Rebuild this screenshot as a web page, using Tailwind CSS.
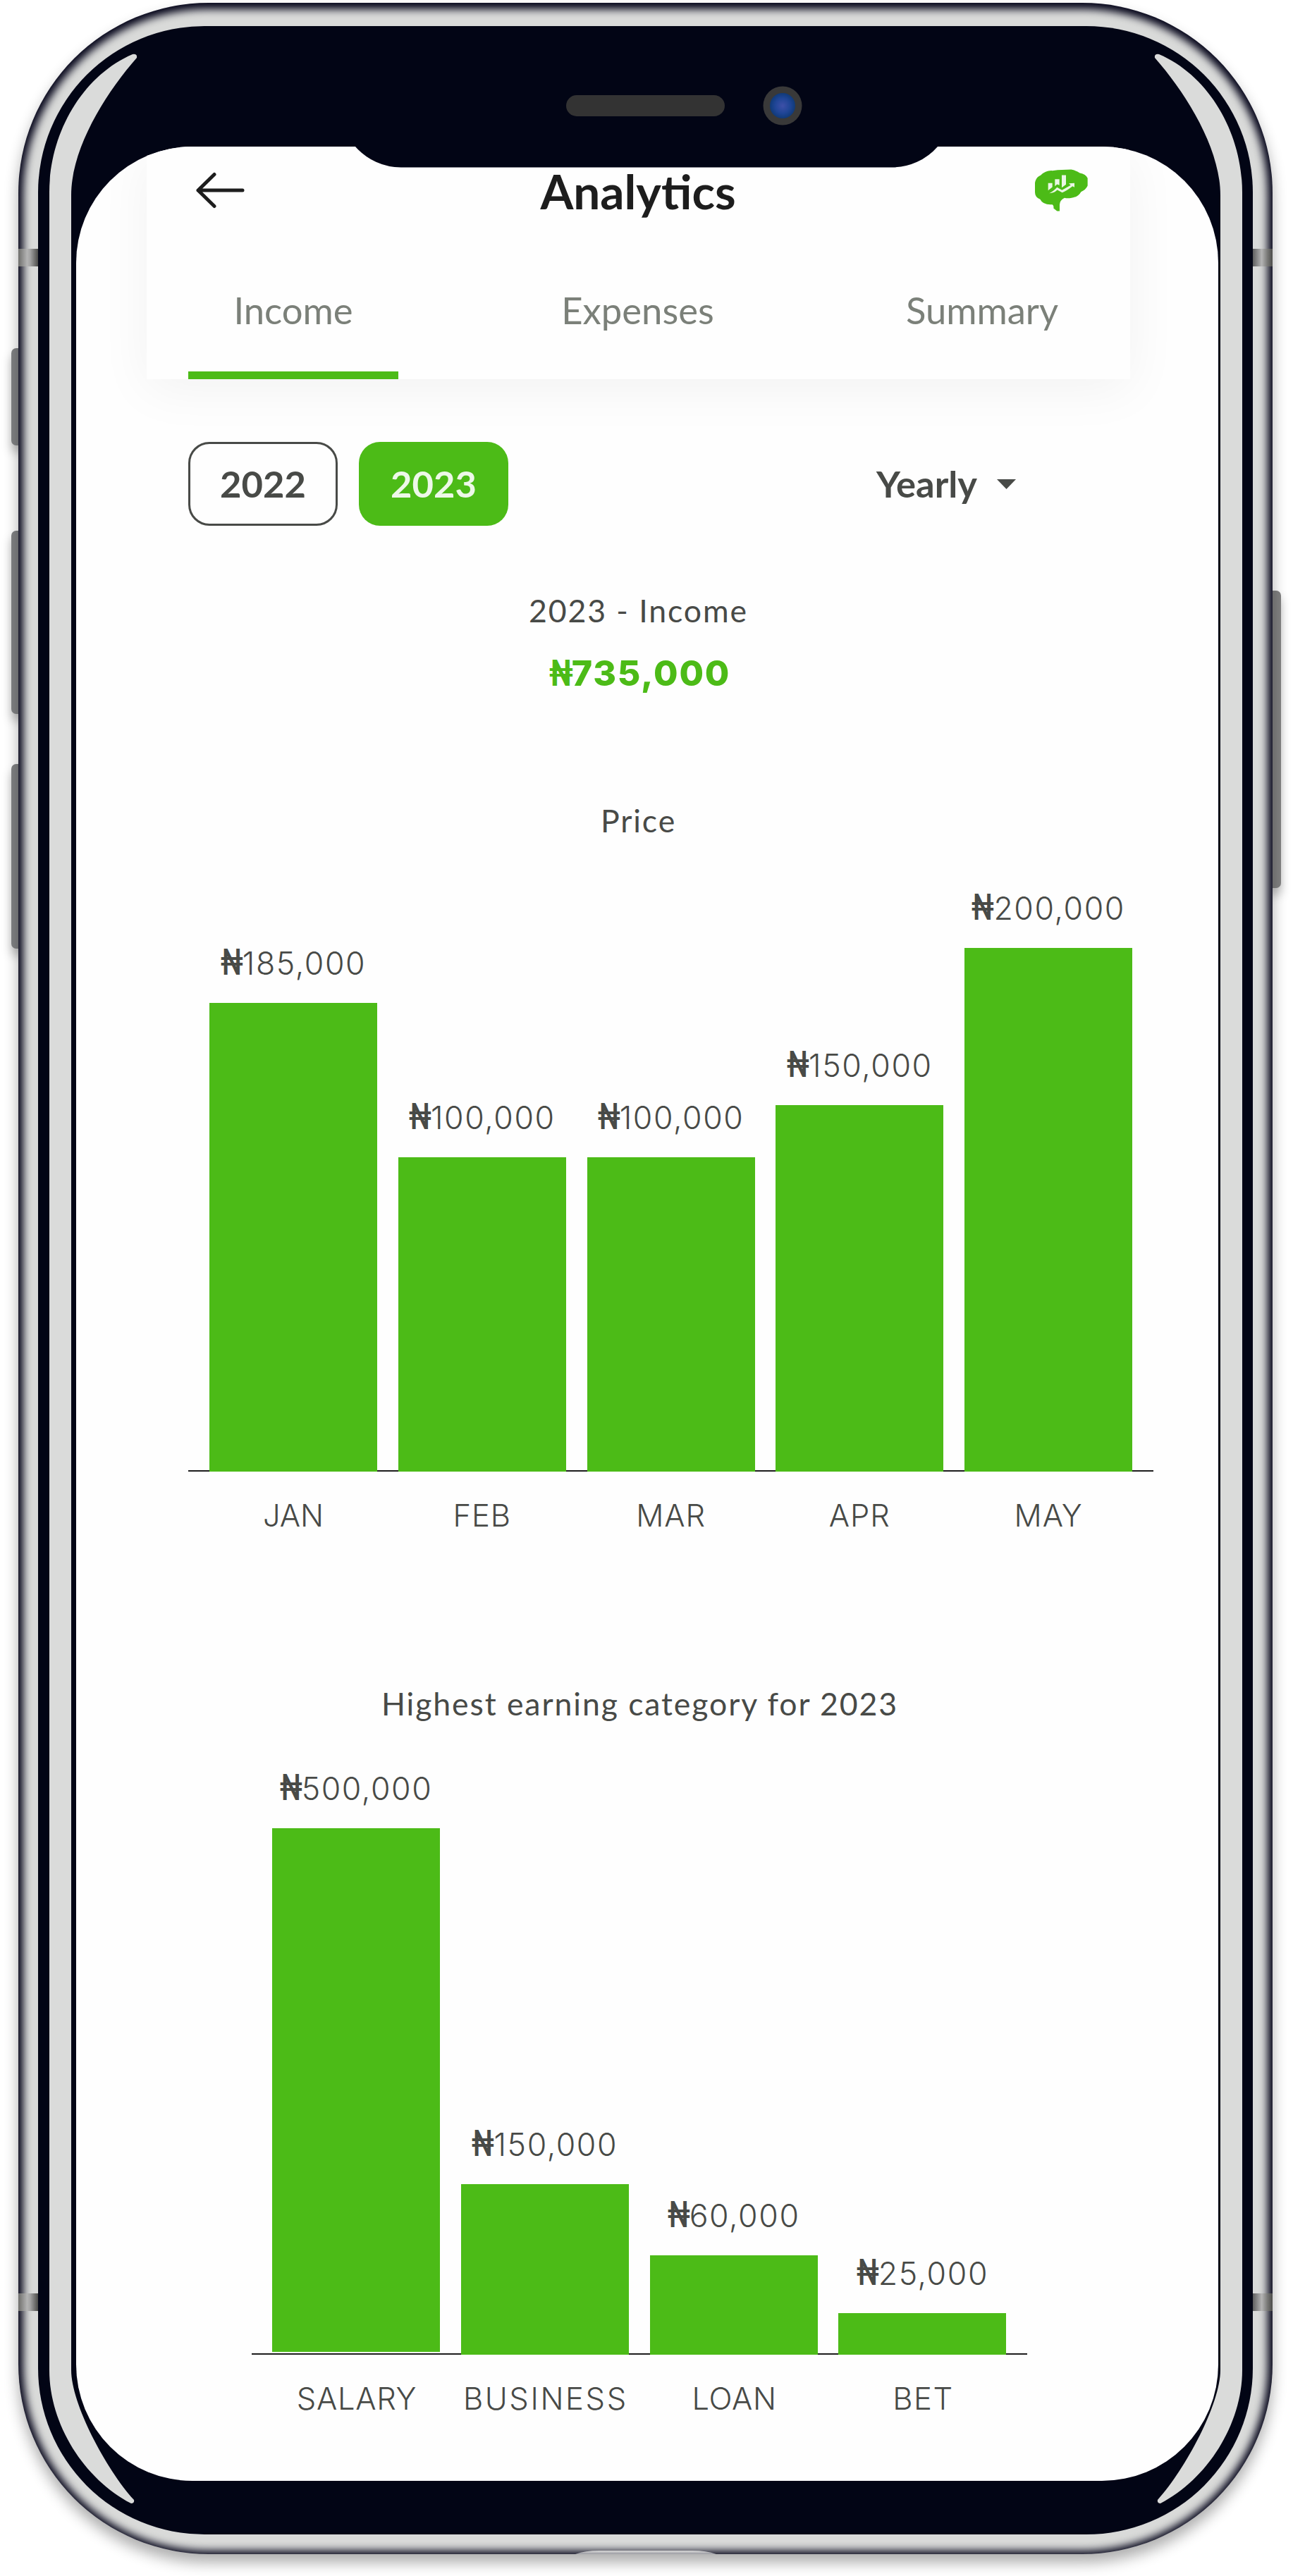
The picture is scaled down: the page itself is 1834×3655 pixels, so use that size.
<!DOCTYPE html>
<html lang="en">
<head>
<meta charset="utf-8">
<title>Analytics</title>
<script src="https://cdn.jsdelivr.net/npm/@tailwindcss/browser@4"></script>
</head>
<body class="bg-white">
<div class="relative w-[1834px] h-[3655px] overflow-hidden pl-[26px] pt-[4px] font-['Lato',sans-serif]">

  <!-- side buttons -->
  <div class="absolute left-[16px] top-[494px] w-[20px] h-[138px] rounded-[7px] bg-[#828385] shadow-[0_10px_14px_rgba(0,0,0,0.25)]"></div>
  <div class="absolute left-[16px] top-[753px] w-[20px] h-[260px] rounded-[7px] bg-[#828385] shadow-[0_10px_14px_rgba(0,0,0,0.25)]"></div>
  <div class="absolute left-[16px] top-[1084px] w-[20px] h-[262px] rounded-[7px] bg-[#828385] shadow-[0_10px_14px_rgba(0,0,0,0.25)]"></div>
  <div class="absolute left-[1797px] top-[838px] w-[20px] h-[422px] rounded-[7px] bg-[#828282] shadow-[0_10px_14px_rgba(0,0,0,0.25)]"></div>

  <!-- device frame -->
  <div class="relative w-[1779px] h-[3620px] rounded-[270px] bg-[#d9dad9] pl-[28px] pt-[33px] shadow-[0_12px_20px_rgba(0,0,0,0.32),inset_0_2px_12px_7px_#05051a]">
    <div class="w-[1723px] h-[3559px] rounded-[236px] bg-[#020515] pl-[54px] pt-[171px]">

      <!-- screen -->
      <div class="w-[1620px] h-[3312px] rounded-[165px] bg-[#fefefe] overflow-hidden pl-[100px]">
        <header class="w-[1395px] h-[330px] bg-[#fefefe] pt-[30px] shadow-[0_14px_70px_rgba(0,0,0,0.05)]">
          <div class="flex items-center justify-between h-[64px] pl-[70px] pr-[60px]">
            <svg class="w-[74px] h-[54px]" viewBox="0 0 74 54" fill="none" stroke="#1d1d1d" stroke-width="5" stroke-linecap="round" stroke-linejoin="round"><path d="M66 27H3M26 4.500L3 27L26 49.500"/></svg>
            <h1 class="pt-[2px] pr-[10px] text-[67.500px] leading-[64px] font-bold text-[#1d1d1d]">Analytics</h1>
            <svg class="w-[75px] h-[60px]" viewBox="84 62 225 179"><path fill="#4cbb17" d="M180 65L238 63Q262 68 275 78Q300 82 308 100V132Q300 150 280 158Q268 180 240 184Q222 187 210 184Q190 194 189 212V240H178L163 228Q165 216 158 212Q118 215 106 190Q84 182 84 160V120Q88 96 108 88Q130 66 158 68Z"/><path fill="#eaf7e5" d="M140 121H158V138L140 152ZM169 104H188V130L178 126L169 134ZM198 87H216V127L198 140ZM145 164Q160 158 178 139L199 151L236 130L228 122L252 121V139L244 134Q215 156 200 161L179 150Q165 164 145 164Z"/></svg>
          </div>
          <nav class="flex justify-between pl-[59px] pr-[61px] pt-[106px] text-[52.600px] leading-[64px] text-[#7b8079] text-center">
            <div class="w-[298px] h-[130px] border-b-[11px] border-[#4cbb17]">Income</div>
            <div class="w-[298px] h-[130px]">Expenses</div>
            <div class="w-[298px] h-[130px]">Summary</div>
          </nav>
        </header>

        <main class="w-[1395px] text-[#484a47]">
          <div class="flex items-center justify-between pt-[89px] pl-[59px] pr-[162px] text-[52.500px] leading-[64px] font-bold">
            <div class="flex gap-[30px]">
              <div class="flex items-center justify-center w-[212px] h-[119px] rounded-[30px] border-[3px] border-[#484a47] pb-[2px]">2022</div>
              <div class="flex items-center justify-center w-[212px] h-[119px] rounded-[30px] bg-[#4cbb17] text-[#edf8e8] pb-[2px]">2023</div>
            </div>
            <div class="flex items-center gap-[28px]">
              <span class="pb-[2px]">Yearly</span>
              <svg class="w-[27px] h-[14px]" viewBox="0 0 27 14"><path fill="#484a47" d="M0 0H27L13.500 14Z"/></svg>
            </div>
          </div>

          <p class="mt-[90px] text-center text-[44.600px] leading-[60px] tracking-[1.900px]">2023 - Income</p>
          <p class="mt-[29px] h-[60px] pl-[4px] flex justify-center items-baseline leading-[60px] font-extrabold text-[#4cbb17] font-['Inter',sans-serif] text-[50px] tracking-[1.800px]"><span class="w-[32px] origin-left scale-x-[0.8] font-['Roboto'] font-bold text-[52px] tracking-normal">₦</span>735,000</p>

          <section class="font-['Inter',sans-serif] font-light text-[44.600px] leading-[60px]">
            <h2 class="mt-[149px] text-center font-normal font-['Lato',sans-serif] tracking-[1.900px]">Price</h2>
            <div class="ml-[59px] flex items-end gap-[29.800px] w-[1369px] h-[894px] pl-[30px] border-b-2 border-[#1d1d1d] whitespace-nowrap tracking-[1.600px]">
              <div class="w-[238px] -mb-[2px]"><p class="flex justify-center items-baseline h-[60px]"><span class="w-[31px] origin-left scale-x-[0.76] text-[52px] font-['Roboto'] font-medium tracking-normal">₦</span>185,000</p><div class="mt-[27px] h-[665px] bg-[#4cbb17]"></div></div>
              <div class="w-[238px] -mb-[2px]"><p class="flex justify-center items-baseline h-[60px]"><span class="w-[31px] origin-left scale-x-[0.76] text-[52px] font-['Roboto'] font-medium tracking-normal">₦</span>100,000</p><div class="mt-[27px] h-[446px] bg-[#4cbb17]"></div></div>
              <div class="w-[238px] -mb-[2px]"><p class="flex justify-center items-baseline h-[60px]"><span class="w-[31px] origin-left scale-x-[0.76] text-[52px] font-['Roboto'] font-medium tracking-normal">₦</span>100,000</p><div class="mt-[27px] h-[446px] bg-[#4cbb17]"></div></div>
              <div class="w-[238px] -mb-[2px]"><p class="flex justify-center items-baseline h-[60px]"><span class="w-[31px] origin-left scale-x-[0.76] text-[52px] font-['Roboto'] font-medium tracking-normal">₦</span>150,000</p><div class="mt-[27px] h-[520px] bg-[#4cbb17]"></div></div>
              <div class="w-[238px] -mb-[2px]"><p class="flex justify-center items-baseline h-[60px]"><span class="w-[31px] origin-left scale-x-[0.76] text-[52px] font-['Roboto'] font-medium tracking-normal">₦</span>200,000</p><div class="mt-[27px] h-[743px] bg-[#4cbb17]"></div></div>
            </div>
            <div class="ml-[89px] mt-[32px] flex gap-[29.800px] w-[1309px] text-center text-[43.500px] tracking-[0.900px]">
              <div class="w-[238px] tracking-normal">JAN</div><div class="w-[238px]">FEB</div><div class="w-[238px]">MAR</div><div class="w-[238px]">APR</div><div class="w-[238px]">MAY</div>
            </div>
          </section>

          <section class="font-['Inter',sans-serif] font-light text-[44.600px] leading-[60px]">
            <h2 class="mt-[207px] pl-[4px] text-center font-normal font-['Lato',sans-serif] tracking-[1.900px]">Highest earning category for 2023</h2>
            <div class="ml-[149px] flex items-end gap-[29.800px] w-[1100px] h-[894px] pl-[29px] border-b-2 border-[#1d1d1d] whitespace-nowrap tracking-[1.600px]">
              <div class="w-[238px] mb-[2px]"><p class="flex justify-center items-baseline h-[60px]"><span class="w-[31px] origin-left scale-x-[0.76] text-[52px] font-['Roboto'] font-medium tracking-normal">₦</span>500,000</p><div class="mt-[27px] h-[743px] bg-[#4cbb17]"></div></div>
              <div class="w-[238px] -mb-[2px]"><p class="flex justify-center items-baseline h-[60px]"><span class="w-[31px] origin-left scale-x-[0.76] text-[52px] font-['Roboto'] font-medium tracking-normal">₦</span>150,000</p><div class="mt-[27px] h-[242px] bg-[#4cbb17]"></div></div>
              <div class="w-[238px] -mb-[2px]"><p class="flex justify-center items-baseline h-[60px]"><span class="w-[31px] origin-left scale-x-[0.76] text-[52px] font-['Roboto'] font-medium tracking-normal">₦</span>60,000</p><div class="mt-[27px] h-[141px] bg-[#4cbb17]"></div></div>
              <div class="w-[238px] -mb-[2px]"><p class="flex justify-center items-baseline h-[60px]"><span class="w-[31px] origin-left scale-x-[0.76] text-[52px] font-['Roboto'] font-medium tracking-normal">₦</span>25,000</p><div class="mt-[27px] h-[59px] bg-[#4cbb17]"></div></div>
            </div>
            <div class="ml-[179px] mt-[32px] flex gap-[29.800px] text-center text-[43.500px] tracking-[1.500px]">
              <div class="w-[238px] tracking-[0.700px]">SALARY</div><div class="w-[238px] tracking-[2.600px]">BUSINESS</div><div class="w-[238px] tracking-[0.700px]">LOAN</div><div class="w-[238px]">BET</div>
            </div>
          </section>
        </main>
      </div>
    </div>
  </div>

  <!-- notch, speaker, camera, edge highlights and antenna bands -->
  <svg class="absolute left-0 top-0 w-[1834px] h-[3655px]" viewBox="0 0 1834 3655">
    <defs>
      <linearGradient id="bandL"><stop offset="0" stop-color="#6e6e6c"/><stop offset=".45" stop-color="#b4b4b4"/><stop offset=".6" stop-color="#a4a4a4"/><stop offset="1" stop-color="#4c4c4a"/></linearGradient>
      <linearGradient id="bandR"><stop offset="0" stop-color="#606060"/><stop offset=".45" stop-color="#b4b4b4"/><stop offset=".75" stop-color="#777775"/><stop offset="1" stop-color="#4c4c4a"/></linearGradient>
      <radialGradient id="lens"><stop offset="0" stop-color="#3e50a8"/><stop offset=".6" stop-color="#1f4596"/><stop offset="1" stop-color="#103a78"/></radialGradient>
      <linearGradient id="port" x1="0" y1="0" x2="0" y2="1"><stop offset="0" stop-color="#d9dad9"/><stop offset="1" stop-color="#9a9aa2"/></linearGradient>
      <path id="shine" d="M70 3363V273C70 190 116 108 188 77Q195 76 194 82C150 132 101 210 101 277V3363C101 3410 150 3503 190 3547Q191 3552 186 3552C120 3518 70 3440 70 3363Z"/>
    </defs>
    <path fill="#020515" d="M500 200L504 208A86 86 0 0 0 569 237.500H1265A86 86 0 0 0 1330 208L1334 200Z"/>
    <rect x="803" y="135" width="225" height="30" rx="15" fill="#333"/>
    <circle cx="1110" cy="150" r="27.500" fill="#393939"/>
    <circle cx="1110" cy="150" r="18" fill="url(#lens)"/>
    <use href="#shine" fill="#dadbda"/>
    <use href="#shine" fill="#dadbda" transform="translate(1832 0) scale(-1 1)"/>
    <rect x="26" y="353" width="28" height="25" fill="url(#bandL)"/>
    <rect x="26" y="3254" width="28" height="25" fill="url(#bandL)"/>
    <rect x="1777" y="353" width="28" height="25" fill="url(#bandR)"/>
    <rect x="1777" y="3254" width="28" height="25" fill="url(#bandR)"/>
    <path fill="url(#port)" d="M816 3624Q830 3619 850 3619H982Q1002 3619 1016 3624Z"/>
  </svg>
</div>
</body>
</html>
